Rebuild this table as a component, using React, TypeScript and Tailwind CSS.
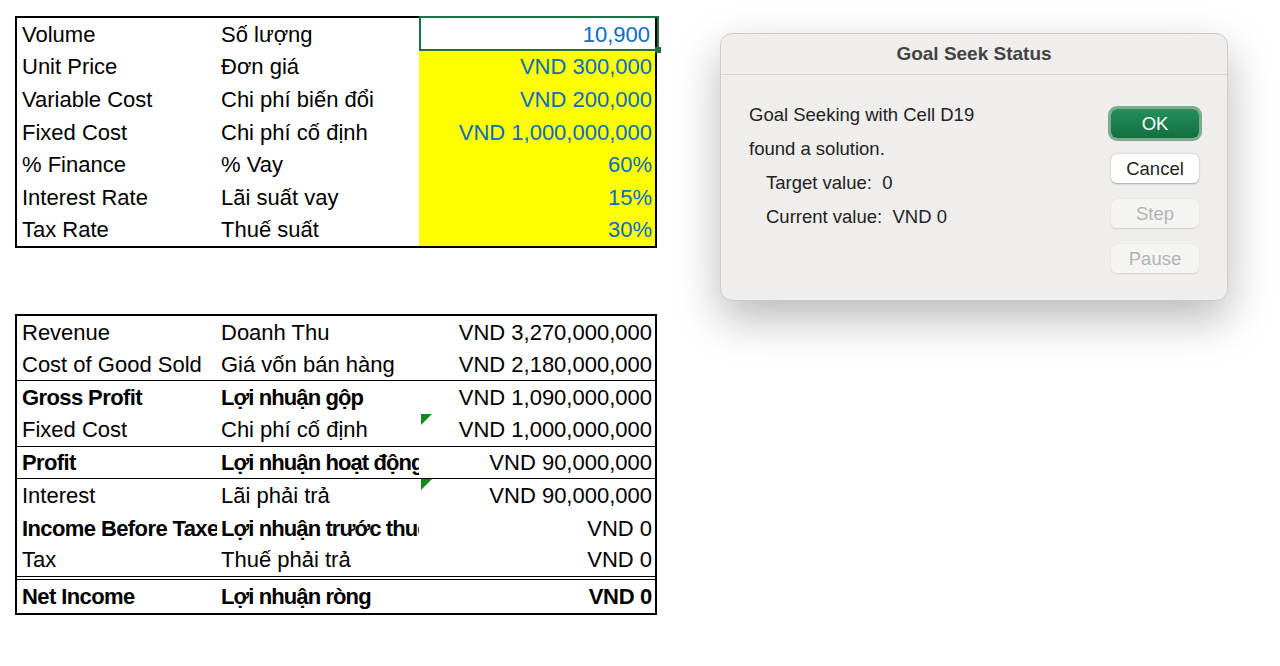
import React from 'react';

interface InputRow {
  en: string;
  vi: string;
  value: string;
}

interface ReportRow {
  en: string;
  vi: string;
  value: string;
  bold?: boolean;
  boldValue?: boolean;
  line?: 'single' | 'double';
  flag?: boolean;
}

const inputs: InputRow[] = [
  { en: 'Volume', vi: 'Số lượng', value: '10,900' },
  { en: 'Unit Price', vi: 'Đơn giá', value: 'VND 300,000' },
  { en: 'Variable Cost', vi: 'Chi phí biến đổi', value: 'VND 200,000' },
  { en: 'Fixed Cost', vi: 'Chi phí cố định', value: 'VND 1,000,000,000' },
  { en: '% Finance', vi: '% Vay', value: '60%' },
  { en: 'Interest Rate', vi: 'Lãi suất vay', value: '15%' },
  { en: 'Tax Rate', vi: 'Thuế suất', value: '30%' },
];

const report: ReportRow[] = [
  { en: 'Revenue', vi: 'Doanh Thu', value: 'VND 3,270,000,000' },
  { en: 'Cost of Good Sold', vi: 'Giá vốn bán hàng', value: 'VND 2,180,000,000', line: 'single' },
  { en: 'Gross Profit', vi: 'Lợi nhuận gộp', value: 'VND 1,090,000,000', bold: true },
  { en: 'Fixed Cost', vi: 'Chi phí cố định', value: 'VND 1,000,000,000', line: 'single', flag: true },
  { en: 'Profit', vi: 'Lợi nhuận hoạt động', value: 'VND 90,000,000', bold: true, line: 'single' },
  { en: 'Interest', vi: 'Lãi phải trả', value: 'VND 90,000,000', flag: true },
  { en: 'Income Before Taxes', vi: 'Lợi nhuận trước thuế', value: 'VND 0', bold: true },
  { en: 'Tax', vi: 'Thuế phải trả', value: 'VND 0', line: 'double' },
  { en: 'Net Income', vi: 'Lợi nhuận ròng', value: 'VND 0', bold: true, boldValue: true },
];

// small green "number stored as text" marker in a cell corner
function ErrorFlag() {
  return (
    <svg className="absolute left-[2px] top-0" width="11" height="11" viewBox="0 0 11 11">
      <polygon points="0,0 11,0 0,11" fill="#138a1c" />
    </svg>
  );
}

function InputTable() {
  return (
    <div className="w-[642px] border-2 border-black">
      {inputs.map((r, i) => (
        <div key={r.en} className="flex h-[32.6px] items-center">
          <div className="w-[200px] overflow-hidden whitespace-nowrap pl-[5px]">{r.en}</div>
          <div className="w-[202px] overflow-hidden whitespace-nowrap pl-[4px]">{r.vi}</div>
          <div
            className={
              i === 0
                ? 'relative flex h-full w-[236px] items-center justify-end pr-[5px] text-[#0a6cc2]'
                : 'flex h-full w-[236px] items-center justify-end bg-[#ffff00] pr-[3px] text-[#0a6cc2]'
            }
          >
            {r.value}
            {i === 0 && (
              <>
                <div className="absolute -top-[2px] -right-[4px] bottom-0 left-0 border-2 border-[#1e7145]" />
                <div className="absolute -bottom-[2px] -right-[6px] h-[6px] w-[6px] bg-[#1e7145]" />
              </>
            )}
          </div>
        </div>
      ))}
    </div>
  );
}

function ReportTable() {
  return (
    <div className="w-[642px] border-2 border-black">
      {report.map((r) => (
        <div
          key={r.en}
          className={
            r.line === 'double'
              ? 'flex h-[36px] items-center border-b-4 border-double border-black pb-[1px]'
              : r.line === 'single'
                ? 'flex h-[32.6px] items-center border-b border-black'
                : 'flex h-[32.6px] items-center'
          }
        >
          <div
            className={`w-[200px] overflow-hidden whitespace-nowrap pl-[5px] ${r.bold ? 'font-bold tracking-[-0.6px]' : ''}`}
          >
            {r.en}
          </div>
          <div
            className={`w-[202px] overflow-hidden whitespace-nowrap pl-[4px] ${r.bold ? 'font-bold tracking-[-0.9px]' : ''}`}
          >
            {r.vi}
          </div>
          <div
            className={`relative flex h-full w-[236px] items-center justify-end pr-[3px] ${r.boldValue ? 'font-bold tracking-[-0.3px]' : ''}`}
          >
            {r.flag && <ErrorFlag />}
            {r.value}
          </div>
        </div>
      ))}
    </div>
  );
}

function GoalSeekDialog() {
  return (
    <div className="absolute left-[720px] top-[33px] h-[268px] w-[508px] rounded-[12px] border border-[#cbcbcb] bg-[#efeeed] font-['Liberation_Sans',Arial,sans-serif] shadow-[0_18px_45px_rgba(0,0,0,0.28)]">
      <div className="flex h-[41px] items-center justify-center border-b border-[#d6d5d4] text-[19px] font-bold text-[#434343]">
        Goal Seek Status
      </div>
      <div className="flex justify-between pl-[28px] pr-[28px]">
        <div className="pt-[23px] text-[18.5px] leading-[34px] text-[#222]">
          <div>Goal Seeking with Cell D19</div>
          <div>found a solution.</div>
          <div className="pl-[17px]">Target value:&nbsp;&nbsp;0</div>
          <div className="pl-[17px]">Current value:&nbsp;&nbsp;VND 0</div>
        </div>
        <div className="flex flex-col gap-[16px] pt-[34px] text-[18.5px]">
          <button
            type="button"
            className="h-[29px] w-[88px] rounded-[6px] bg-gradient-to-b from-[#23905a] to-[#11703f] text-white shadow-[0_0_0_3px_#7dab8f]"
          >
            OK
          </button>
          <button
            type="button"
            className="h-[29px] w-[88px] rounded-[6px] bg-white text-[#1f1f1f] shadow-[0_0.5px_2px_rgba(0,0,0,0.3)]"
          >
            Cancel
          </button>
          <button
            type="button"
            className="h-[29px] w-[88px] rounded-[6px] bg-[#f4f4f3] text-[#b3b3b3] shadow-[0_0.5px_1.5px_rgba(0,0,0,0.12)]"
          >
            Step
          </button>
          <button
            type="button"
            className="h-[29px] w-[88px] rounded-[6px] bg-[#f4f4f3] text-[#b3b3b3] shadow-[0_0.5px_1.5px_rgba(0,0,0,0.12)]"
          >
            Pause
          </button>
        </div>
      </div>
    </div>
  );
}

export default function App() {
  return (
    <div className="relative h-[666px] w-[1280px] overflow-hidden bg-white font-['Liberation_Sans',Arial,sans-serif] text-[22px] text-black">
      <div className="flex flex-col gap-[66px] pl-[15px] pt-[16px]">
        <InputTable />
        <ReportTable />
      </div>
      <GoalSeekDialog />
    </div>
  );
}
